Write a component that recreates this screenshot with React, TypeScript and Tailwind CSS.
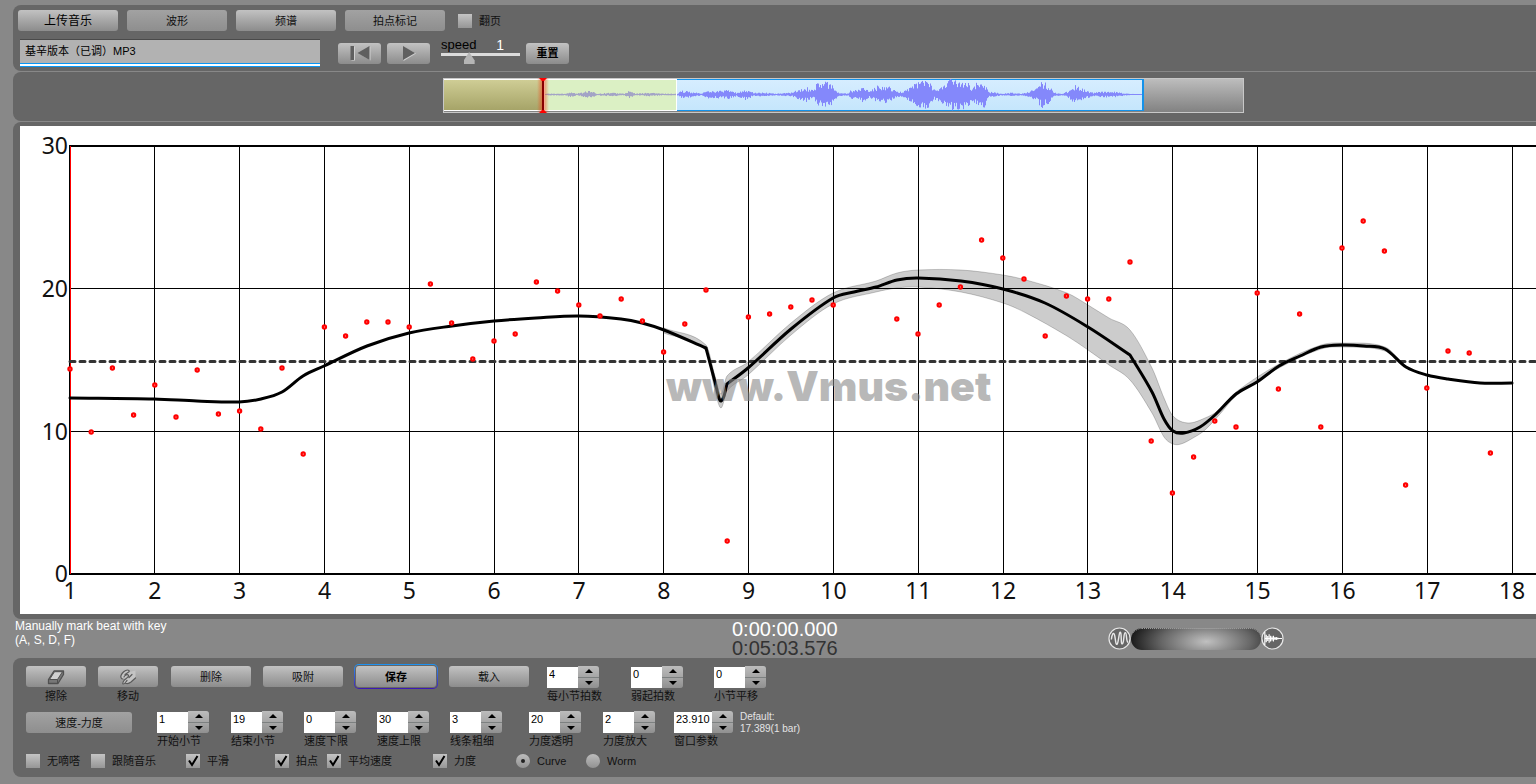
import { useId, useState, type ReactNode } from "react";
import clsx from "clsx";

type Point = [number, number];

const BEAT = 21.2;
const LEFT = 50;

// vertical position of every beat in the plot, null when it is off the scale
const beats = [
  243, 306, 242, 289, 259, 291, 244, 288, 285, 303, 242, 328, 201, 210, 196, 196,
  201, 158, 197, 233, 215, 208, 156, 165, 179, 190, 173, 195, 226, 198, 164, 415,
  191, 188, 181, 174, 179, null, null, 193, 208, 179, 161, 114, 132, 153, 210, 170,
  173, 173, 136, 315, 367, 331, 295, 301, 167, 263, 188, 301, 122, 95, 125, 359,
  262, 225, 227, 327,
];

const curve: Point[][] = [
  [
    [50, 272], [134, 273], [177, 275], [219, 276], [241, 273], [262, 266], [283, 250],
    [304, 240], [347, 220], [389, 207], [432, 200], [474, 195], [516, 192], [559, 190],
    [601, 193], [622, 197], [644, 204], [686, 222],
  ],
  [[686, 222], [695, 256], [699, 272], [701, 275], [704, 270], [707, 258]],
  [
    [707, 258], [728, 242], [771, 203], [813, 172], [834, 166], [856, 161], [877, 154],
    [898, 152], [941, 155], [983, 163], [1025, 177], [1068, 201], [1110, 229],
  ],
  [
    [1110, 229], [1132, 266], [1144, 293], [1153, 305], [1164, 307], [1180, 301],
    [1195, 289], [1216, 268], [1237, 256], [1259, 240], [1280, 230], [1301, 221],
    [1322, 219], [1344, 220], [1365, 223], [1386, 241], [1407, 249], [1428, 253],
    [1460, 257], [1492, 257],
  ],
];

const bandTop: Point[] = [
  [644, 202], [686, 219], [695, 250], [701, 268], [707, 250], [728, 236], [771, 197],
  [813, 167], [856, 155], [877, 147], [898, 144], [941, 144], [983, 149], [1006, 154],
  [1047, 167], [1068, 179], [1089, 192], [1110, 204], [1132, 242], [1144, 272],
  [1153, 290], [1168, 297], [1185, 292], [1199, 284], [1216, 266], [1259, 238],
  [1301, 219], [1322, 217], [1365, 221], [1386, 241],
];
const bandBottom: Point[] = [
  [1386, 242], [1365, 225], [1322, 221], [1301, 223], [1259, 242], [1216, 270],
  [1200, 288], [1185, 304], [1173, 312], [1161, 318], [1153, 318], [1144, 311],
  [1132, 287], [1110, 254], [1089, 239], [1068, 224], [1047, 210], [1006, 187],
  [983, 177], [941, 166], [898, 161], [877, 162], [856, 166], [813, 178], [771, 209],
  [728, 249], [707, 265], [701, 282], [695, 265], [686, 225], [644, 207],
];

const envelope: Point[] = [
  [100, 1], [120, 1], [127, 3], [132, 1], [145, 4], [153, 1], [166, 2], [180, 1],
  [185, 4], [191, 1], [207, 2], [217, 1], [233, 1], [237, 4], [247, 3], [257, 1],
  [263, 4], [277, 4], [283, 5], [292, 2], [301, 6], [309, 2], [322, 2], [332, 1],
  [347, 2], [354, 5], [362, 8], [369, 4], [373, 13], [387, 13], [394, 2], [404, 1],
  [406, 5], [410, 4], [419, 8], [425, 3], [433, 9], [444, 9], [452, 3], [457, 3],
  [467, 9], [475, 16], [484, 15], [489, 5], [497, 8], [502, 16], [524, 16], [527, 6],
  [532, 12], [540, 13], [545, 3], [552, 2], [557, 1], [567, 2], [577, 1], [584, 3],
  [592, 6], [597, 14], [605, 10], [610, 2], [617, 1], [625, 4], [630, 10], [642, 4],
  [649, 2], [657, 3], [669, 3], [682, 1], [700, 0],
];

function slope(pts: Point[], i: number) {
  const [ax, ay] = pts[Math.max(i - 1, 0)];
  const [bx, by] = pts[Math.min(i + 1, pts.length - 1)];
  return (by - ay) / (bx - ax);
}

function smooth(pts: Point[]) {
  return pts
    .map(([x, y], i) => {
      if (i === 0) return `${x} ${y}`;
      const [px, py] = pts[i - 1];
      const h = (x - px) / 3;
      return `C${px + h} ${py + h * slope(pts, i - 1)} ${x - h} ${y - h * slope(pts, i)} ${x} ${y}`;
    })
    .join(" ");
}

function noise(n: number) {
  const v = Math.sin(n * 127.1) * 43758.5;
  return v - Math.floor(v);
}

function wavePath(from: number, to: number) {
  let d = "";
  for (let x = from; x < to; x++) {
    const i = Math.max(envelope.findIndex(([ex]) => ex > x), 1);
    const [x0, a0] = envelope[i - 1];
    const [x1, a1] = envelope[i];
    const amp = a0 + ((a1 - a0) * (x - x0)) / (x1 - x0);
    const up = Math.max(amp * (0.4 + 0.6 * noise(x)), 0.5);
    const down = Math.max(amp * (0.4 + 0.6 * noise(x + 999)), 0.5);
    d += `M${x + 0.5} ${15.5 - up}V${15.5 + down}`;
  }
  return d;
}

const face = "bg-linear-to-b from-[#c2c2c2] to-[#8c8c8c]";

function Button({
  children,
  className,
  flat,
  label,
}: {
  children: ReactNode;
  className?: string;
  flat?: boolean;
  label?: string;
}) {
  return (
    <button
      type="button"
      aria-label={label}
      className={clsx(
        "flex h-[21px] items-center justify-center rounded-[3px] whitespace-nowrap",
        flat ? "bg-linear-to-b from-[#a2a2a2] to-[#8e8e8e]" : face,
        className,
      )}
    >
      {children}
    </button>
  );
}

function Check({ label, on = false }: { label: string; on?: boolean }) {
  return (
    <label className="flex h-[14px] items-center gap-[7px] whitespace-nowrap">
      <span className="grid size-[14px] shrink-0">
        <input
          type="checkbox"
          defaultChecked={on}
          className="peer col-start-1 row-start-1 size-[14px] appearance-none bg-linear-to-b from-[#c4c4c4] to-[#969696]"
        />
        <svg viewBox="0 0 14 14" className="pointer-events-none col-start-1 row-start-1 hidden size-[14px] peer-checked:block">
          <path d="M3 6.5 6 11 11.5 2" fill="none" stroke="#000" strokeWidth="2" />
        </svg>
      </span>
      {label}
    </label>
  );
}

function Radio({ label, on = false }: { label: string; on?: boolean }) {
  return (
    <label className="flex h-[14px] items-center gap-[7px]">
      <span className="grid size-[14px] shrink-0 place-items-center">
        <input
          type="radio"
          name="view"
          defaultChecked={on}
          className="peer col-start-1 row-start-1 size-[14px] appearance-none rounded-full bg-linear-to-b from-[#bdbdbd] to-[#929292]"
        />
        <span className="pointer-events-none col-start-1 row-start-1 hidden size-1 rounded-full bg-[#222] peer-checked:block" />
      </span>
      {label}
    </label>
  );
}

function Arrow({ down }: { down?: boolean }) {
  return (
    <svg viewBox="0 0 8 4" className="h-1 w-2">
      <path d={down ? "M0 0H8L4 4Z" : "M0 4H8L4 0Z"} fill="#000" />
    </svg>
  );
}

function Stepper({ label, start, wide }: { label: string; start: string; wide?: boolean }) {
  const id = useId();
  const [value, setValue] = useState(start);
  const step = (by: number) => setValue((v) => String(Number(v) + by));
  return (
    <div>
      <div className="flex h-[22px]">
        <input
          id={id}
          value={value}
          onChange={(e) => setValue(e.target.value)}
          className={clsx("mt-px h-[21px] bg-white pb-[7px] pl-[2px] text-black", wide ? "w-[38px]" : "w-[31px]")}
        />
        <div className="flex w-[21px] flex-col gap-px overflow-hidden rounded-r-[3px] bg-[#7c8080]">
          <button type="button" aria-label={`${label} +`} onClick={() => step(1)} className="flex flex-1 items-center justify-center bg-linear-to-b from-[#bcbcbc] to-[#a6a6a6]">
            <Arrow />
          </button>
          <button type="button" aria-label={`${label} -`} onClick={() => step(-1)} className="flex flex-1 items-center justify-center bg-linear-to-b from-[#a6a6a6] to-[#909090]">
            <Arrow down />
          </button>
        </div>
      </div>
      <label htmlFor={id} className="mt-px block leading-[14px] whitespace-nowrap">
        {label}
      </label>
    </div>
  );
}

function Toolbar() {
  return (
    <section className="rounded-l-lg bg-[#666] pt-[5px] pb-1 pl-[5px]">
      <div className="flex items-center gap-[9px]">
        <Button className="w-[100px] text-xs text-black">上传音乐</Button>
        <Button className="w-[100px]" flat>波形</Button>
        <Button className="w-[100px]">频谱</Button>
        <Button className="w-[100px]" flat>拍点标记</Button>
        <div className="ml-1">
          <Check label="翻页" />
        </div>
      </div>
      <div className="mt-2 ml-0.5 flex h-7 items-center">
        <div className="w-[300px]">
          <input
            aria-label="音乐"
            defaultValue="基辛版本（已调）MP3"
            className="block h-6 w-full border-t border-[#4a4a4a] bg-[#b2b2b2] pb-1 pl-[5px] text-black"
          />
          <div className="h-1 border-y border-[#0a97f5] bg-white" />
        </div>
        <Button className="ml-[18px] w-[43px]" label="回到开头">
          <svg viewBox="0 0 22 16" className="h-4 w-[22px]">
            <path d="M2.5 1.5h3.500v14h-3.500zM21.500 1.500v14L9.500 8.500z" fill="#d0d0d0" />
            <path d="M1.500 1h3.500v14h-3.500zM20.500 1v14L8.500 8z" fill="#5f5f5f" />
          </svg>
        </Button>
        <Button className="ml-1.5 w-[43px]" label="播放">
          <svg viewBox="0 0 14 16" className="h-4 w-[14px]">
            <path d="M1.500 1.500v14.500L14 8.500z" fill="#d0d0d0" />
            <path d="M1 1v14l12-7z" fill="#5f5f5f" />
          </svg>
        </Button>
        <div className="ml-[11px] w-[79px] pb-1">
          <div className="flex justify-between pr-4 text-[13px] leading-[14px] text-black">
            <label htmlFor="speed">speed</label>
            <span className="text-sm leading-[14px] text-white">1</span>
          </div>
          <input
            id="speed"
            type="range"
            min="0"
            max="3"
            step="0.1"
            defaultValue="1"
            className="block h-3 w-full appearance-none bg-[linear-gradient(#dcdcdc,#dcdcdc)] bg-[length:100%_3px] bg-[position:0_1px] bg-no-repeat [&::-webkit-slider-thumb]:h-3 [&::-webkit-slider-thumb]:w-[11px] [&::-webkit-slider-thumb]:appearance-none [&::-webkit-slider-thumb]:bg-[#b5b5b5] [&::-webkit-slider-thumb]:[clip-path:polygon(50%_0,100%_70%,100%_100%,0_100%,0_70%)]"
          />
        </div>
        <Button className="ml-1.5 w-[43px] font-bold text-black">重置</Button>
      </div>
    </section>
  );
}

function Overview() {
  return (
    <section className="rounded-l-lg bg-[#666] pt-1.5 pb-2 pl-[430px]">
      <div className="relative flex h-[35px] w-[801px] border border-[#c8c8c8] bg-linear-to-b from-[#bdbdbd] to-[#828282]">
        <div className="h-8 w-[100px] border-y border-white bg-linear-to-b from-[#cfcd95] to-[#a6a468]" />
        <div className="h-8 w-[133px] border border-white bg-[#dbf0c4]" />
        <div className="h-8 w-[467px] border-y border-r-2 border-[#1492ea] bg-linear-to-b from-[#d6edff] to-[#c5e6fc]" />
        <svg className="absolute top-0 left-0 h-8 w-[700px]" fill="none">
          <path d={wavePath(101, 232)} stroke="#a3a4c6" />
          <path d={wavePath(233, 698)} stroke="#8488fb" />
        </svg>
        <div className="absolute -top-px left-[93px] flex h-[35px] w-3 justify-center bg-linear-to-r from-[#f0401000] via-[#f04010a0] to-[#f0401000]">
          <div className="w-[2px] border-y-2 border-red-600 bg-[#800]" />
        </div>
        <svg className="absolute -top-px left-[95px] h-[35px] w-2" viewBox="0 0 8 35">
          <path d="M0 0H8L5 3H3ZM0 35H8L5 32H3Z" fill="#f00" />
        </svg>
      </div>
    </section>
  );
}

function Chart() {
  const bars = Array.from({ length: 18 }, (_, i) => i);
  return (
    <section className="rounded-l-lg bg-[#666] pt-1 pb-[5px] pl-[7px]">
      <svg className="block h-[488px] w-full bg-white" fill="none">
        <g stroke="#000" shapeRendering="crispEdges">
          {bars.slice(1).map((i) => (
            <line key={i} x1={Math.floor(LEFT + i * 84.83) + 0.5} x2={Math.floor(LEFT + i * 84.83) + 0.5} y1="20" y2="448" />
          ))}
          <line x1="49" x2="100%" y1="162.500" y2="162.500" />
          <line x1="49" x2="100%" y1="305.500" y2="305.500" />
          <line x1="49" x2="100%" y1="20" y2="20" strokeWidth="2" />
          <line x1="49" x2="100%" y1="448" y2="448" strokeWidth="2" />
          <line x1="49.500" x2="49.500" y1="20" y2="448" />
          <line x1="50.500" x2="50.500" y1="20" y2="448" stroke="#f00" />
        </g>
        <g fill="#111" className="font-['Noto_Sans',sans-serif] text-[23px]">
          {[30, 20, 10, 0].map((n, i) => (
            <text key={n} x="48" y={28 + i * 143 - (n === 0 ? 1 : 0)} textAnchor="end">{n}</text>
          ))}
          {bars.map((i) => (
            <text key={i} x={LEFT + i * 84.83} y="473" textAnchor="middle">{i + 1}</text>
          ))}
        </g>
        <path d={`M${smooth(bandTop)}L${smooth(bandBottom)}Z`} fill="#000" fillOpacity="0.2" stroke="#000" strokeOpacity="0.2" />
        <line x1="50" x2="100%" y1="235.500" y2="235.500" stroke="#333" strokeWidth="3" strokeLinecap="round" strokeDasharray="5 5" />
        <path d={curve.map((c) => `M${smooth(c)}`).join("")} stroke="#000" strokeWidth="3" strokeLinecap="round" />
        {beats.map((y, i) => y !== null && <circle key={i} cx={LEFT + i * BEAT} cy={y} r="1.600" fill="#fff" stroke="#f00" strokeWidth="2.200" />)}
        <text x="646" y="275" fill="#888" fillOpacity="0.6" className="font-['Inter',sans-serif] text-[41px] font-black">
          www.Vmus.net
        </text>
      </svg>
    </section>
  );
}

function Status() {
  return (
    <section className="flex h-[39px] items-start pl-0.5 text-white">
      <p className="w-[717px] text-xs leading-[14px]">
        Manually mark beat with key
        <br />
        (A, S, D, F)
      </p>
      <div className="w-[376px] pt-px text-xl leading-[19px]">
        <p>0:00:00.000</p>
        <p className="text-[#333]">0:05:03.576</p>
      </div>
      <div className="flex items-center pt-2">
        <svg viewBox="0 0 24 24" className="size-[23px]" fill="none" stroke="#e8e8e8">
          <circle cx="12" cy="12" r="11" fill="#666" strokeWidth="1.200" />
          <path d="M3.500 13C4 8 6 4 7 9s1 10 2.500 9S11.500 4 13 5.500s0 13 2 12S16 6 18 6s.5 9 3 10" strokeWidth="1.500" />
        </svg>
        <input
          type="range"
          aria-label="Zoom"
          className="h-[22px] w-[130px] appearance-none rounded-full border-t border-dotted border-[#999] bg-[radial-gradient(ellipse_75px_32px_at_58%_60%,#c0c0c0,#666_60%,#1c1c1c)] [&::-webkit-slider-thumb]:size-4 [&::-webkit-slider-thumb]:appearance-none"
        />
        <svg viewBox="0 0 24 24" className="size-[23px]" fill="none" stroke="#e8e8e8">
          <circle cx="12" cy="12" r="11" fill="#666" strokeWidth="1.200" />
          <path d="M4 5v14M5.500 8v8M7 9.500v5M8.500 7.500v9M10 9v6M11.500 10v4M13 9v6M14.500 10.500v3M16 10.500v3M17.500 11v2M4 12h18" stroke="#fff" strokeWidth="1.200" />
        </svg>
      </div>
    </section>
  );
}

function Controls() {
  return (
    <section className="rounded-l-lg bg-[#666] pt-2 pb-[9px] pl-[13px]">
      <div className="grid h-[37px] grid-cols-[72px_73px_92px_93px_93px_98px_84px_83px_auto] items-start">
        <div className="w-[60px] text-center leading-[14px]">
          <Button className="w-full" label="擦除">
            <svg viewBox="0 0 18 16" className="h-4 w-[18px]" strokeLinejoin="round">
              <path d="M1.500 10.500 7 2h9.500v3.500L11 14.500H1.500z" fill="#777" stroke="#505050" strokeWidth="1.300" />
              <path d="M2.500 10.500 7.500 2.700h8L10.500 10.500z" fill="#d0d0d0" stroke="#505050" />
              <path d="M10.500 10.500V14" stroke="#505050" />
            </svg>
          </Button>
          <span className="mt-0.5 block">擦除</span>
        </div>
        <div className="w-[60px] text-center leading-[14px]">
          <Button className="w-full" label="移动">
            <svg viewBox="0 0 18 16" className="h-4 w-[18px]" strokeLinecap="round" strokeLinejoin="round">
              <path
                d="M16.500 1.500V9L12 13c-2 1.500-4 1.500-5.500 1L4.500 15C3 15 3 13.500 4 12.500L6.500 9.500 4 10C2 10 1.500 8 2 6.500 3 4 6 1 8.500 1c2 0 2 1.500 1.500 2z"
                fill="#c4c4c4"
              />
              <path
                d="M4 10C2 10 1.500 8 2 6.500 3 4 6 1 8.500 1c2.500 0 2 2 .5 2.500L6 5.500M5 8c0-1.500 4-3.500 4.500-1.500S6 10 5 11.500 3 15 4.500 15 7 12.500 8 11.500M6.500 14.200c2 .8 4 0 5.500-1.200l4.500-4M13 5.500 10 8.500"
                fill="none"
                stroke="#5a5a5a"
                strokeWidth="1.200"
              />
            </svg>
          </Button>
          <span className="mt-0.5 block">移动</span>
        </div>
        <Button className="w-20">删除</Button>
        <Button className="w-20">吸附</Button>
        <div className="-m-0.5 w-[84px] rounded-[5px] bg-linear-to-b from-[#1c94f2] to-[#3c14b4] p-px">
          <div className="rounded-[4px] bg-[#666] p-px">
            <Button className="w-full font-bold text-black">保存</Button>
          </div>
        </div>
        <Button className="w-20">载入</Button>
        <Stepper label="每小节拍数" start="4" />
        <Stepper label="弱起拍数" start="0" />
        <Stepper label="小节平移" start="0" />
      </div>
      <div className="mt-2 grid h-[37px] grid-cols-[131px_74px_73px_73px_73px_79px_74px_71px_66px_auto] items-start">
        <Button className="mt-px w-[106px]" flat>速度-力度</Button>
        <Stepper label="开始小节" start="1" />
        <Stepper label="结束小节" start="19" />
        <Stepper label="速度下限" start="0" />
        <Stepper label="速度上限" start="30" />
        <Stepper label="线条粗细" start="3" />
        <Stepper label="力度透明" start="20" />
        <Stepper label="力度放大" start="2" />
        <Stepper label="窗口参数" start="23.910" wide />
        <p className="text-[10px] leading-3 text-[#e4e4e4]">
          Default:
          <br />
          17.389(1 bar)
        </p>
      </div>
      <div className="mt-1.5 grid grid-cols-[65px_95px_89px_52px_106px_83px_70px_auto]">
        <Check label="无嘀嗒" />
        <Check label="跟随音乐" />
        <Check label="平滑" on />
        <Check label="拍点" on />
        <Check label="平均速度" on />
        <Check label="力度" on />
        <Radio label="Curve" on />
        <Radio label="Worm" />
      </div>
    </section>
  );
}

export default function App() {
  return (
    <main className="min-h-screen overflow-x-hidden bg-[#888] pt-[5px] pb-[7px] pl-[13px] font-['Liberation_Sans','Noto_Sans_CJK_SC',sans-serif] text-[11px] leading-[14px] text-[#111]">
      <div className="flex flex-col gap-px">
        <Toolbar />
        <Overview />
        <Chart />
      </div>
      <Status />
      <Controls />
    </main>
  );
}
